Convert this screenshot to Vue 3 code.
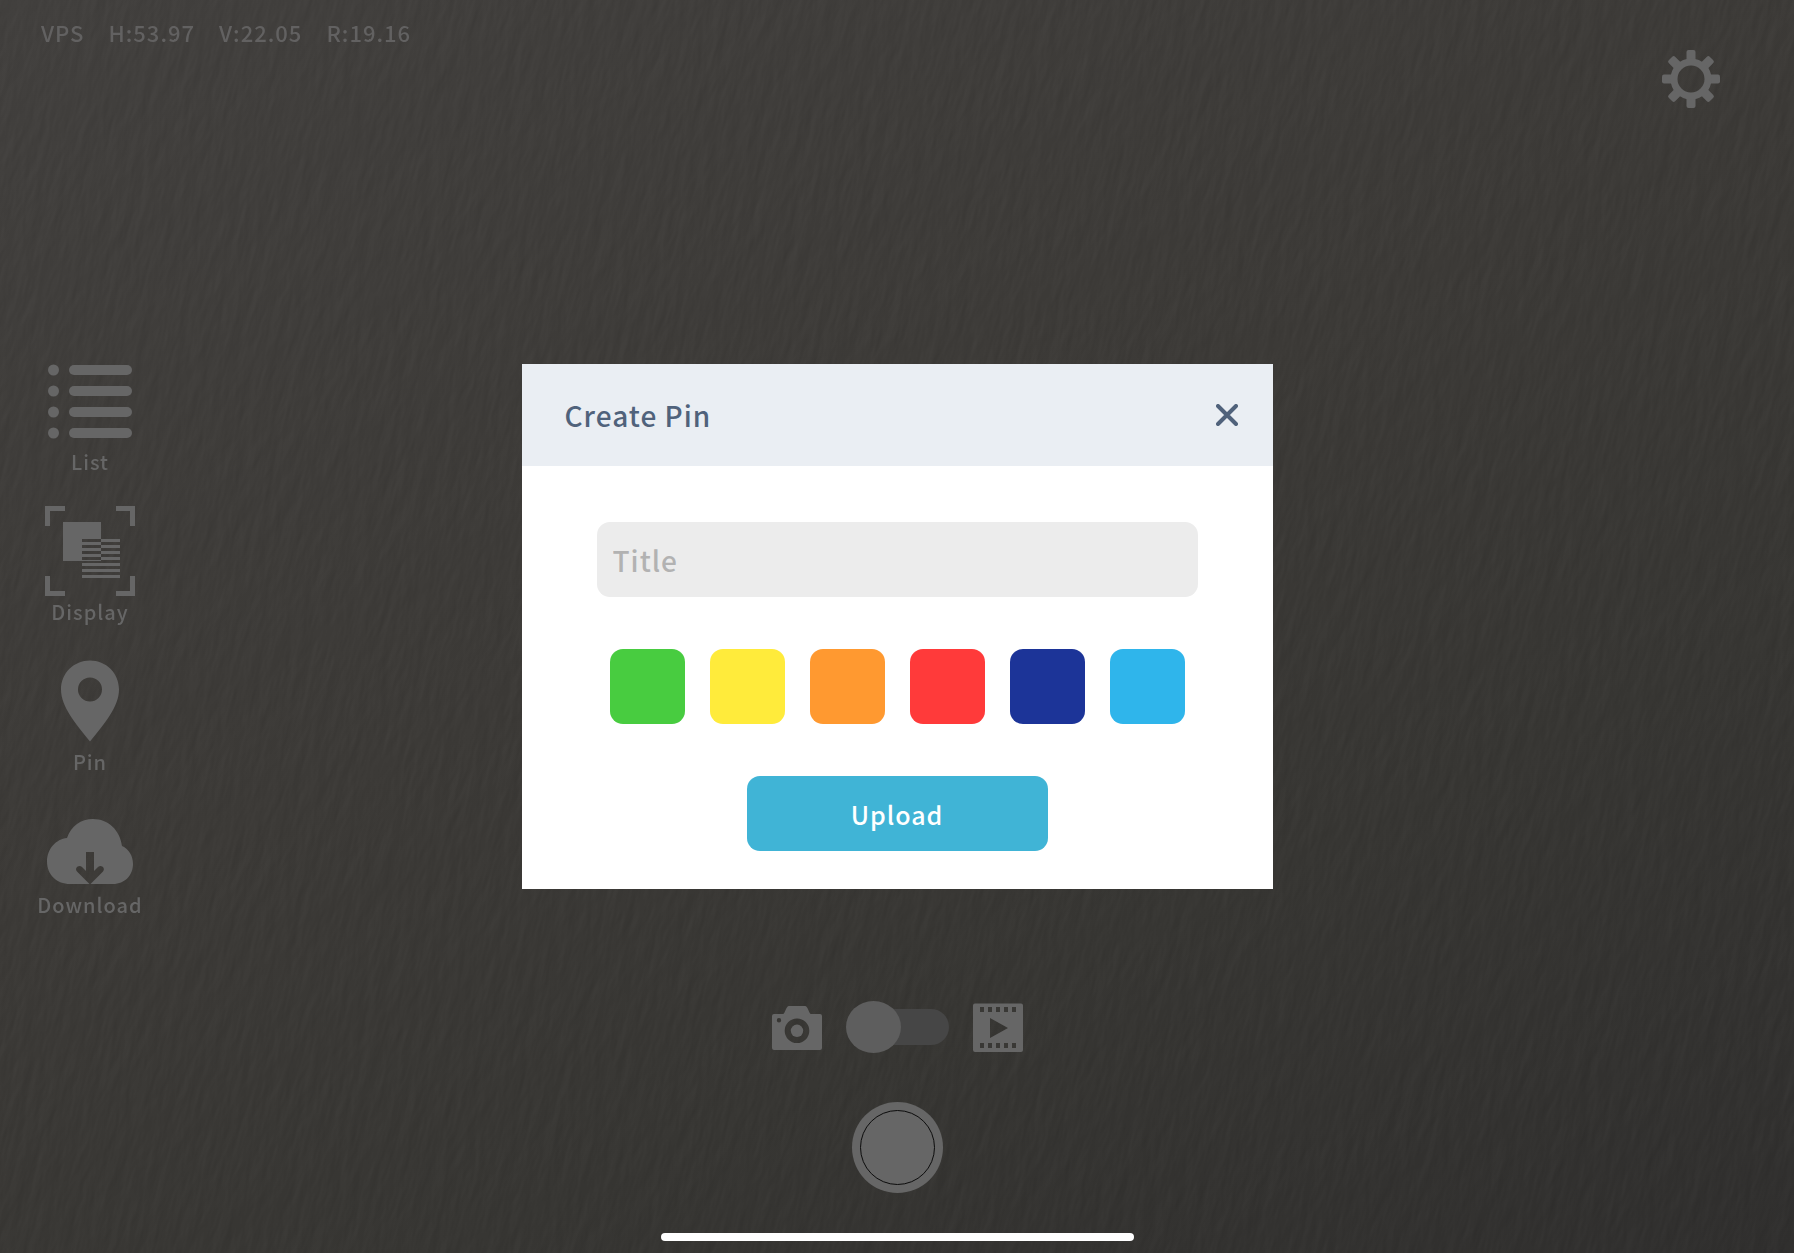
<script setup>
import { ref } from 'vue'

const title = ref('')
const selectedColor = ref(null)
const isVideo = ref(false)
const isOpen = ref(true)

const pose = [
  { key: 'H', value: '53.97' },
  { key: 'V', value: '22.05' },
  { key: 'R', value: '19.16' }
]

const colors = ['green', 'yellow', 'orange', 'red', 'navy', 'sky']

// The stripes are cut out where they cross the square in the Display icon
const stripes = [33, 39, 45, 51, 57, 63, 69].map((y) => `M37 ${y}h38v3H37z`).join('')

const closeModal = () => {
  isOpen.value = false
}
</script>

<template>
  <div class="ar-view">
    <!-- Camera feed: rough plaster wall -->
    <svg class="wall" aria-hidden="true">
      <filter id="plaster" x="0" y="0" width="100%" height="100%" color-interpolation-filters="sRGB">
        <feTurbulence type="fractalNoise" baseFrequency="0.09 0.025" numOctaves="3" seed="8" result="noise" />
        <feDiffuseLighting in="noise" surfaceScale="2" lighting-color="#ffffff">
          <feDistantLight azimuth="200" elevation="30" />
        </feDiffuseLighting>
      </filter>
      <rect width="100%" height="100%" filter="url(#plaster)" />
    </svg>

    <header class="top-bar">
      <div class="status">
        <span>VPS</span>
        <span v-for="item in pose" :key="item.key">{{ item.key }}:{{ item.value }}</span>
      </div>
      <button class="icon-button" type="button" aria-label="Settings">
        <svg width="58" height="58" viewBox="0 0 58 58" fill="currentColor">
          <rect v-for="n in 8" :key="n" x="24.500" y="0" width="9" height="14" rx="2" :transform="`rotate(${n * 45} 29 29)`" />
          <circle cx="29" cy="29" r="17" fill="none" stroke="currentColor" stroke-width="7" />
        </svg>
      </button>
    </header>

    <nav class="side-menu">
      <button class="menu-item" type="button">
        <svg width="90" height="90" viewBox="0 0 90 90" fill="currentColor">
          <g v-for="n in 4" :key="n">
            <circle cx="8.500" :cy="n * 21 - 7" r="5.500" />
            <rect x="24" :y="n * 21 - 12" width="63" height="10" rx="5" />
          </g>
        </svg>
        <span>List</span>
      </button>
      <button class="menu-item" type="button">
        <svg width="90" height="90" viewBox="0 0 90 90" fill="currentColor">
          <path d="M0 0h20v5H5v15H0zM71 0h19v20h-5V5H71zM0 70h5v15h15v5H0zM85 70h5v20H71v-5h14z" />
          <path fill-rule="evenodd" :d="`M18 16h38v39H18z${stripes}`" />
        </svg>
        <span>Display</span>
      </button>
      <button class="menu-item" type="button">
        <svg width="90" height="90" viewBox="0 0 90 90" fill="currentColor">
          <path fill-rule="evenodd" d="M45 4.500C29 4.500 16 17 16 33.500C16 51 31 68 45 85.500C59 68 74 51 74 33.500C74 17 61 4.500 45 4.500zM45 21.500a12 12 0 1 1 0 24a12 12 0 1 1 0-24z" />
        </svg>
        <span>Pin</span>
      </button>
      <button class="menu-item" type="button">
        <svg width="90" height="83" viewBox="0 0 90 83" fill="currentColor">
          <path fill-rule="evenodd" d="M25 78C12 78 2 69 2 55.500C2 43 11 33 22 32C26 20 36 13 48 13C63 13 75 24 77 40C84 43 88 50 88 58C88 69 80 78 68 78H45.500L58 65.500C61 62 56 58 53 61L49 65V46H41V65L37 61C34 58 29 62 32 65.500L44.500 78z" />
        </svg>
        <span>Download</span>
      </button>
    </nav>

    <footer class="capture">
      <div class="mode">
        <svg width="50" height="50" viewBox="0 0 50 50" fill="currentColor">
          <path fill-rule="evenodd" d="M2 12h9c2 0 3-8 6-8h16c3 0 4 8 6 8h9q2 0 2 2v32q0 2-2 2H2q-2 0-2-2V14q0-2 2-2zM25 16.500a12.300 12.300 0 1 0 0 24.600a12.300 12.300 0 1 0 0-24.600zM7 16a2.200 2.200 0 1 0 0 4.400a2.200 2.200 0 1 0 0-4.400z" />
          <circle cx="25" cy="28.800" r="6.200" />
        </svg>
        <input v-model="isVideo" class="mode-switch" type="checkbox" role="switch" aria-label="Video mode">
        <svg width="50" height="50" viewBox="0 0 50 50" fill="currentColor">
          <path fill-rule="evenodd" d="M2 1.500h46q2 0 2 2v44.500q0 2-2 2H2q-2 0-2-2V3.500q0-2 2-2zM17 16v20l18-10z" />
          <g class="film-holes">
            <rect v-for="n in 5" :key="n" :x="n * 8 - 1" y="5" width="4" height="5" />
            <rect v-for="n in 5" :key="n + 5" :x="n * 8 - 1" y="41" width="4" height="5" />
          </g>
        </svg>
      </div>
      <button class="shutter" type="button" aria-label="Shutter"></button>
      <div class="home-indicator"></div>
    </footer>

    <!-- Create Pin modal -->
    <div v-if="isOpen" class="overlay">
      <form class="modal" role="dialog" aria-labelledby="modal-title" @submit.prevent="closeModal">
        <div class="modal-header">
          <h1 id="modal-title" class="modal-title">Create Pin</h1>
          <button class="close" type="button" aria-label="Close" @click="closeModal">
            <svg width="22" height="22" viewBox="0 0 22 22" fill="none" stroke="currentColor" stroke-width="4" stroke-linecap="round">
              <path d="M2 2l18 18M20 2L2 20" />
            </svg>
          </button>
        </div>
        <div class="modal-body">
          <input v-model="title" class="title-input" type="text" placeholder="Title" aria-label="Title">
          <div class="swatches">
            <button
              v-for="color in colors"
              :key="color"
              type="button"
              :class="['swatch', color]"
              :aria-label="color"
              :aria-pressed="selectedColor === color"
              @click="selectedColor = color"
            ></button>
          </div>
          <button class="upload" type="submit">Upload</button>
        </div>
      </form>
    </div>
  </div>
</template>

<style>
body {
  margin: 0;
}
</style>

<style scoped>
.ar-view {
  position: relative;
  min-height: 100vh;
  display: flex;
  flex-direction: column;
  overflow: hidden;
  color: #666666;
  background: linear-gradient(155deg, #42403e 0%, #3c3a37 45%, #373633 70%, #302f2e 100%);
  font-family: "Noto Sans CJK JP", "Noto Sans", sans-serif;
  font-weight: 500;
}

.wall {
  position: absolute;
  top: -30%;
  left: -20%;
  width: 140%;
  height: 160%;
  transform: rotate(14deg);
  opacity: 0.09;
  mix-blend-mode: soft-light;
}

.top-bar, .side-menu, .capture {
  position: relative;
}

button {
  padding: 0;
  border: none;
  background: none;
  color: inherit;
  font: inherit;
  letter-spacing: inherit;
  cursor: pointer;
}

svg {
  display: block;
}

.top-bar {
  display: flex;
  justify-content: space-between;
  align-items: flex-start;
  padding: 14px 74px 0 41px;
}

.status {
  display: flex;
  gap: 24px;
  font-size: 22px;
  line-height: 36px;
  letter-spacing: 1px;
  color: #626161;
}

.icon-button {
  margin-top: 36px;
}

.side-menu {
  flex: 1;
  display: flex;
  flex-direction: column;
  justify-content: flex-end;
  align-items: flex-start;
  gap: 28px;
  padding: 0 0 80px 30px;
}

.menu-item {
  width: 120px;
  display: flex;
  flex-direction: column;
  align-items: center;
  font-size: 20px;
  line-height: 32px;
  letter-spacing: 1px;
}

.capture {
  display: flex;
  flex-direction: column;
  align-items: center;
  padding-bottom: 12px;
}

.mode {
  display: flex;
  align-items: center;
  gap: 24px;
}

.mode-switch {
  appearance: none;
  width: 103px;
  height: 52px;
  margin: 0;
  display: flex;
  align-items: center;
}

.mode-switch::before {
  content: "";
  width: 55px;
  height: 52px;
  border-radius: 50%;
  background: #5e5e5e;
  z-index: 1;
}

.mode-switch::after {
  content: "";
  flex: 1;
  height: 36px;
  margin-left: -20px;
  border-radius: 0 18px 18px 0;
  background: #464646;
}

.mode-switch:checked {
  transform: scaleX(-1);
}

.film-holes {
  fill: #393835;
}

.shutter {
  width: 91px;
  height: 91px;
  margin: 49px 0 40px;
  display: grid;
  place-items: center;
  border-radius: 50%;
  background: #666666;
}

.shutter::before {
  content: "";
  width: 73px;
  height: 73px;
  border: 1px solid #0c0c0c;
  border-radius: 50%;
}

.home-indicator {
  width: 473px;
  max-width: 60%;
  height: 8px;
  border-radius: 4px;
  background: #ffffff;
}

.overlay {
  position: absolute;
  inset: 0;
  display: flex;
  align-items: center;
  justify-content: center;
}

.modal {
  width: 751px;
  max-width: 94%;
  background: #ffffff;
}

.modal-header {
  display: flex;
  justify-content: space-between;
  align-items: center;
  padding: 29px 35px 29px 43px;
  background: #eaeef3;
  color: #50627b;
}

.modal-title {
  margin: 0;
  font-size: 28px;
  font-weight: 500;
  line-height: 44px;
  letter-spacing: 1px;
}

.modal-body {
  display: flex;
  flex-direction: column;
  align-items: center;
  gap: 52px;
  padding: 56px 75px 38px;
}

.title-input {
  box-sizing: border-box;
  width: 100%;
  height: 75px;
  padding: 0 16px;
  border: none;
  border-radius: 13px;
  outline: none;
  background: #ececec;
  color: #50627b;
  font: inherit;
  font-size: 28px;
  letter-spacing: 1px;
}

.title-input::placeholder {
  color: #b2b2b2;
  opacity: 1;
}

.swatches {
  display: flex;
  gap: 25px;
}

.swatch {
  width: 75px;
  height: 75px;
  border-radius: 13px;
}

.green {
  background: #48cc40;
}

.yellow {
  background: #ffeb3b;
}

.orange {
  background: #ff9930;
}

.red {
  background: #ff3a3a;
}

.navy {
  background: #1c3498;
}

.sky {
  background: #2fb5eb;
}

.upload {
  width: 301px;
  height: 75px;
  border-radius: 13px;
  background: #40b4d6;
  color: #ffffff;
  font-size: 25px;
  letter-spacing: 1px;
}
</style>
